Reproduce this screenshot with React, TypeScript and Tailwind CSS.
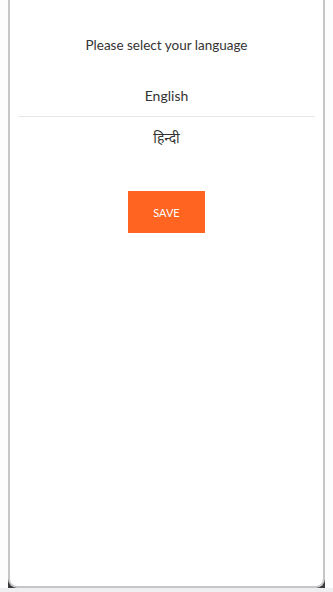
import React from "react";

export default function App() {
  return (
    <div className="w-[333px] h-[592px] bg-[#fdfdfd] flex flex-col overflow-hidden" style={{ fontFamily: "Lato, 'Noto Sans', 'Noto Sans Devanagari', sans-serif" }}>
      <div className="relative ml-[8px] w-[317px] h-[588px]">
        <div className="absolute left-0 bottom-0 w-[10px] h-[10px] bg-[#3a3a3a]" />
        <div className="absolute right-0 bottom-0 w-[10px] h-[10px] bg-[#3a3a3a]" />
        <div className="relative h-full bg-white border-x-2 border-b-2 border-[#c6c6c6] rounded-b-[9px] flex flex-col items-center">
          <div className="pt-[35px] text-[13.5px] leading-[20px] text-[#333333]">Please select your language</div>
          <div className="mt-[31px] w-full px-2">
            <div className="h-[31px] border-b border-[#e6e6e6] text-center text-[14px] leading-[20px] text-[#333333]">English</div>
            <div className="pt-[11px] text-center text-[14px] leading-[20px] text-[#333333]">हिन्दी</div>
          </div>
          <button className="mt-[43px] w-[77px] h-[42px] bg-[#ff6421] text-white text-[11px] leading-none flex items-center justify-center">SAVE</button>
        </div>
      </div>
      <div className="h-[4px] bg-[#efeff1]" />
    </div>
  );
}
